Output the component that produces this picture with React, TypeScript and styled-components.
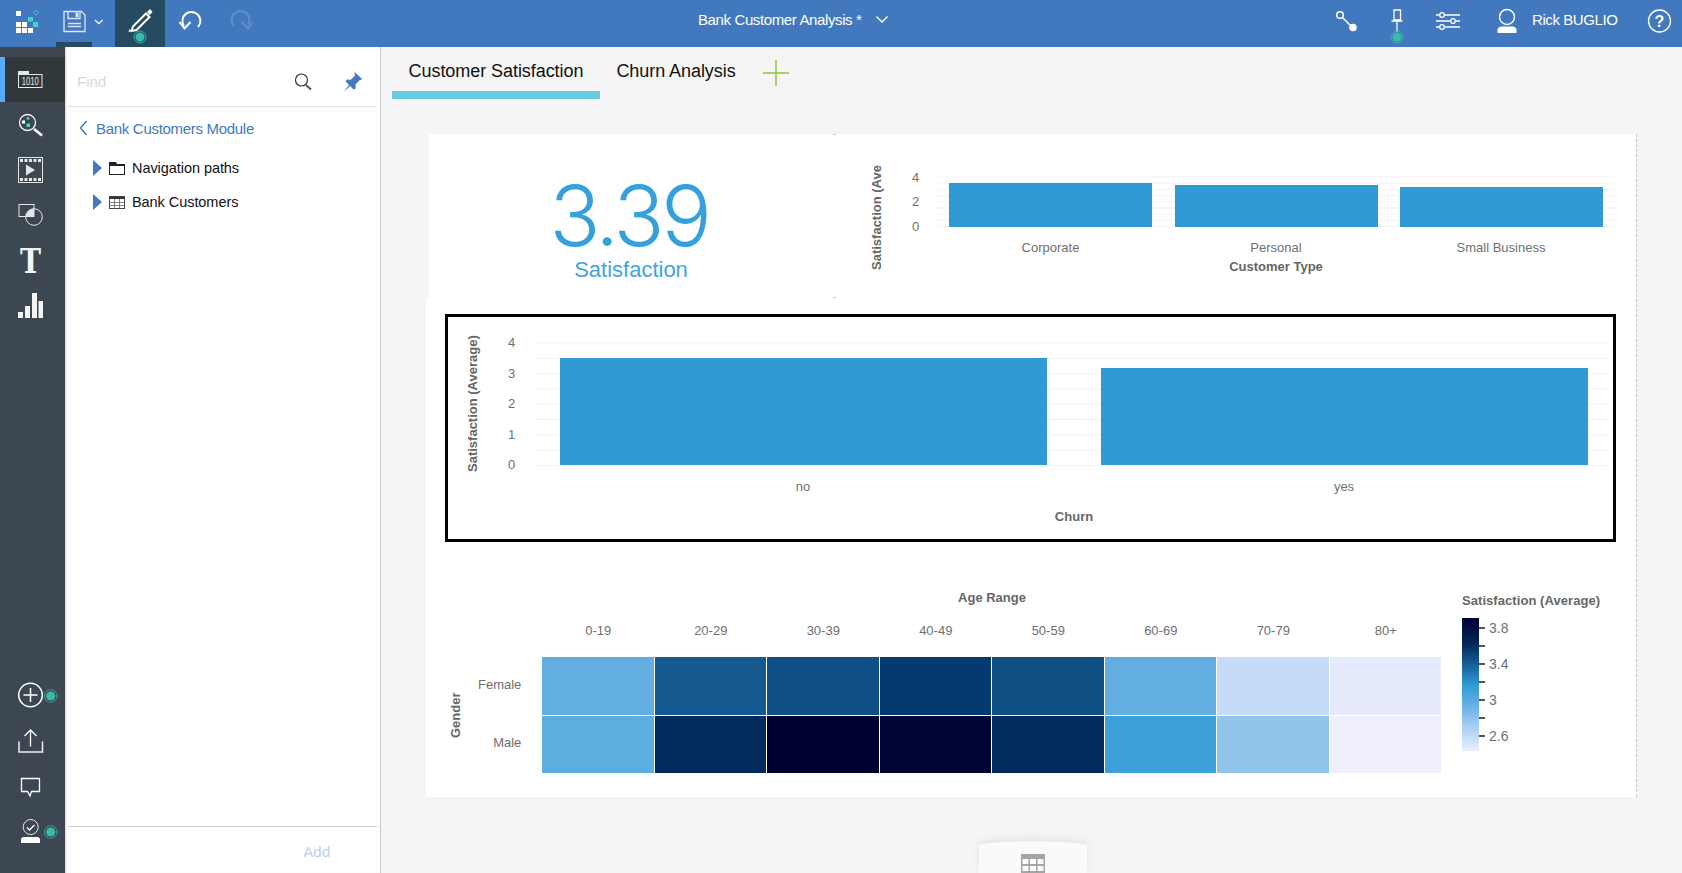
import React from "react";
import styled, { createGlobalStyle } from "styled-components";

const FONT = `"Liberation Sans", Arial, sans-serif`;

const Global = createGlobalStyle`
  html, body { margin: 0; padding: 0; height: 100%; overflow: hidden; background: #f5f5f5; }
  body { font-family: ${FONT}; }
  #root { height: 100%; }
  * { box-sizing: border-box; }
`;

const Page = styled.div`
  width: 1682px;
  height: 873px;
  display: flex;
  flex-direction: column;
  overflow: hidden;
`;

/* ---------- top bar ---------- */
const TopBar = styled.header`
  height: 47px;
  flex: none;
  background: #4178be;
  display: flex;
  align-items: stretch;
  color: #fff;
`;
const BarCell = styled.div<{ $w: number; $active?: boolean }>`
  width: ${(p) => p.$w}px;
  flex: none;
  height: 47px;
  position: relative;
  background: ${(p) => (p.$active ? "#264a60" : "transparent")};
  svg { display: block; }
`;
const SaveMark = styled.span`
  position: absolute;
  left: 0;
  bottom: 0;
  width: 36px;
  height: 5px;
  background: #264a60;
`;
const TitleGroup = styled.div`
  margin-left: 433px;
  display: flex;
  align-items: center;
  font-size: 15px;
  letter-spacing: -0.38px;
  padding-bottom: 8px;
  gap: 14px;
  height: 47px;
  svg { display: block; }
`;
const RightGroup = styled.div`
  margin-left: auto;
  display: flex;
  align-items: stretch;
`;
const UserName = styled.div`
  width: 107px;
  padding-left: 5px;
  padding-bottom: 8px;
  display: flex;
  align-items: center;
  font-size: 15px;
  letter-spacing: -0.42px;
`;

/* ---------- body ---------- */
const Body = styled.div`
  flex: 1;
  display: flex;
  min-height: 0;
`;
const Rail = styled.nav`
  width: 65px;
  flex: none;
  background: #3d4752;
  padding: 10px 0 17px;
  display: flex;
  flex-direction: column;
`;
const RailSpacer = styled.div`
  flex: 1;
`;
const RailItem = styled.div<{ $h?: number; $active?: boolean }>`
  width: 65px;
  height: ${(p) => p.$h ?? 45}px;
  flex: none;
  background: ${(p) => (p.$active ? "#31383c" : "transparent")};
  border-left: ${(p) => (p.$active ? "5px solid #5aaafa" : "0")};
  svg { display: block; margin-left: ${(p) => (p.$active ? "-5px" : "0")}; }
`;

/* ---------- side panel ---------- */
const Panel = styled.aside`
  width: 316px;
  flex: none;
  background: #fff;
  border-right: 1px solid #c9c9c9;
  box-shadow: inset 2px 0 2px -1px #d5d5d5;
  display: flex;
  flex-direction: column;
`;
const FindRow = styled.div`
  height: 60px;
  flex: none;
  margin: 0 3px;
  padding: 10px 0 0 9px;
  border-bottom: 1px solid #e3e3e3;
  display: flex;
  align-items: center;
`;
const FindText = styled.span`
  flex: 1;
  font-size: 15px;
  color: #d6d9db;
`;
const FindIcon = styled.svg<{ $mr: number; $mt?: number }>`
  display: block;
  flex: none;
  margin-right: ${(p) => p.$mr}px;
  margin-top: ${(p) => p.$mt ?? 0}px;
`;
const BackRow = styled.div`
  height: 42px;
  display: flex;
  align-items: center;
  padding-left: 14px;
  gap: 8px;
  font-size: 15px;
  letter-spacing: -0.3px;
  color: #4178be;
`;
const TreeList = styled.div`
  flex: 1;
  padding-top: 2px;
`;
const TreeRow = styled.div`
  height: 34px;
  display: flex;
  align-items: center;
  padding-left: 28px;
  font-size: 14.500px;
  letter-spacing: -0.06px;
  color: #111;
  svg { display: block; flex: none; }
`;
const TreeArrow = styled.svg`
  margin-right: 7px;
`;
const TreeIcon = styled.svg`
  margin-right: 7px;
`;
const PanelFooter = styled.div`
  height: 47px;
  flex: none;
  margin: 0 3px;
  border-top: 1.5px solid #cfcfcf;
  display: flex;
  align-items: center;
  justify-content: flex-end;
  padding: 2px 47px 0 0;
  font-size: 15px;
  color: #b9d0ee;
`;

/* ---------- main ---------- */
const Main = styled.main`
  flex: 1;
  position: relative;
  background: #f5f5f5;
  min-width: 0;
`;
const TabStrip = styled.div`
  height: 52px;
  padding-left: 11px;
  display: flex;
`;
const Tab = styled.div<{ $active?: boolean; $w: number }>`
  width: ${(p) => p.$w}px;
  height: 52px;
  display: flex;
  justify-content: center;
  padding-top: 13px;
  font-size: 18px;
  line-height: 22px;
  letter-spacing: -0.06px;
  color: #111;
  border-bottom: 8px solid ${(p) => (p.$active ? "#68cbe1" : "transparent")};
`;
const AddTab = styled.svg`
  display: block;
  margin: 13px 0 0 11px;
`;
const Board = styled.div`
  margin: 35px 0 0 45px;
  width: 1211px;
  border-right: 1px dashed #c8c8c8;
`;
const TopRow = styled.div`
  display: flex;
  height: 164px;
  padding-left: 3px;
`;
const KpiCard = styled.section`
  width: 404px;
  background: #fff;
  display: flex;
  flex-direction: column;
  align-items: center;
  padding-top: 40px;
  color: #34a0dc;
`;
const KpiValue = styled.div`
  font-family: "Inter", ${FONT};
  font-weight: 300;
  font-size: 84px;
  line-height: 84px;
  letter-spacing: -3.200px;
  padding-right: 4px;
`;
const KpiLabel = styled.div`
  font-size: 22px;
  line-height: 26px;
  margin-top: -1px;
  color: #42a4de;
`;
const BarCard = styled.section`
  flex: 1;
  background: #fff;
  svg { display: block; }
`;
const MiddleRow = styled.section`
  height: 250px;
  background: #fff;
  padding: 16px 19px 6px 19px;
`;
const SelectedBox = styled.div`
  height: 228px;
  width: 1171px;
  border: 3px solid #000;
  svg { display: block; }
`;
const HeatCard = styled.section`
  height: 249px;
  background: #fff;
  display: flex;
`;
const Heat = styled.div`
  width: 1016px;
  flex: none;
  display: grid;
  grid-template-columns: 116px repeat(8, 112.5px);
  grid-template-rows: 37px 24px 48px 58.5px 58.5px;
`;
const HeatTitle = styled.div`
  grid-column: 2 / span 8;
  grid-row: 2;
  display: flex;
  align-items: center;
  justify-content: center;
  font-size: 13px;
  font-weight: 700;
  color: #666;
`;
const ColLabel = styled.div<{ $col: number }>`
  grid-row: 3;
  grid-column: ${(p) => p.$col};
  display: flex;
  justify-content: center;
  align-items: center;
  padding-bottom: 6px;
  font-size: 13px;
  color: #6f6f6f;
`;
const RowHeads = styled.div`
  grid-column: 1;
  grid-row: 4 / span 2;
  display: flex;
  align-items: stretch;
`;
const GenderTitle = styled.div`
  width: 58px;
  flex: none;
  writing-mode: vertical-rl;
  transform: rotate(180deg);
  font-size: 13px;
  font-weight: 700;
  color: #666;
  display: flex;
  justify-content: center;
  align-items: center;
`;
const RowLabels = styled.div`
  flex: 1;
  display: grid;
  grid-template-rows: 1fr 1fr;
  padding-right: 21px;
  font-size: 13px;
  color: #6f6f6f;
  white-space: nowrap;
  margin-left: -6px;
  margin-right: 6px;
`;
const RowLabel = styled.div`
  display: flex;
  align-items: center;
  justify-content: flex-end;
  padding-bottom: 4px;
`;
const Cell = styled.div<{ $c: string; $col: number; $row: number }>`
  grid-column: ${(p) => p.$col};
  grid-row: ${(p) => p.$row};
  background: ${(p) => p.$c};
  border-right: 1px solid #fff;
  border-bottom: 1px solid #fff;
`;
const Legend = styled.div`
  margin-left: 20px;
  padding-top: 45px;
`;
const LegendTitle = styled.div`
  font-size: 13px;
  line-height: 16px;
  font-weight: 700;
  letter-spacing: 0.06px;
  color: #666;
  white-space: nowrap;
`;
const LegendScale = styled.div`
  margin-top: 9px;
  display: flex;
`;
const LegendBar = styled.div`
  width: 17px;
  height: 133px;
  background: linear-gradient(#000030 0%, #03295c 20%, #1a6aa6 38%, #2f9ad6 50%, #6fb4e6 68%, #a9cff2 82%, #e8effe 100%);
`;
const LegendTicks = styled.div`
  padding-top: 1px;
  display: flex;
  flex-direction: column;
`;
const LegendTick = styled.div`
  height: 18px;
  display: flex;
  align-items: center;
  font-size: 14px;
  color: #6f6f6f;
  &::before {
    content: "";
    width: 6px;
    height: 1.5px;
    background: #555;
    margin-right: 4px;
  }
`;
const BottomTab = styled.div`
  position: absolute;
  left: 598px;
  bottom: 0;
  width: 108px;
  height: 32px;
  background: #fafafa;
  border-radius: 50% 50% 0 0 / 5px 5px 0 0;
  box-shadow: 0 -3px 8px rgba(0, 0, 0, 0.07);
  display: flex;
  justify-content: center;
  padding-top: 13px;
  svg { display: block; }
`;

const AxisNum = styled.text`
  font-family: ${FONT};
  font-size: 13px;
  fill: #6f6f6f;
`;
const AxisTitle = styled.text`
  font-family: ${FONT};
  font-size: 13px;
  font-weight: 700;
  fill: #666;
`;

const Dot = ({ cx, cy }: { cx: number; cy: number }) => (
  <g>
    <circle cx={cx} cy={cy} r={6.3} fill="none" stroke="#3ab8a8" strokeWidth={0.8} />
    <circle cx={cx} cy={cy} r={4.6} fill="#3ab8a8" />
  </g>
);

const W = "#fff";
const S = { fill: "none", stroke: W, strokeWidth: 1.5 } as const;

const Logo = () => (
  <svg width={56} height={47} viewBox="0 0 56 47">
    <g fill={W}>
      <rect x={16} y={11} width={5} height={5} />
      <rect x={16} y={22} width={5} height={5} />
      <rect x={22} y={22} width={5} height={5} />
      <rect x={16} y={28} width={5} height={5} />
      <rect x={22} y={28} width={5} height={5} />
      <rect x={28} y={28} width={5} height={5} />
    </g>
    <g fill="#41d6c3">
      <rect x={28} y={17} width={5} height={4.5} />
      <rect x={33} y={22} width={5} height={5} />
    </g>
    <rect x={34} y={11} width={3.6} height={3.6} transform="rotate(45 36 13)" fill="none" stroke="#41d6c3" strokeWidth={0.8} />
  </svg>
);

const Save = () => (
  <svg width={59} height={47} viewBox="56 0 59 47">
    <path d="M64 11.5h17.5l3.5 3.5v16.5h-21z" fill="none" stroke="#dbe6f5" strokeWidth={1.3} />
    <path d="M68 11.5v7h12v-7" fill="none" stroke="#dbe6f5" strokeWidth={1.3} />
    <rect x={75.5} y={12.5} width={3} height={4.5} fill="#dbe6f5" />
    <path d="M68 23.5h13M68 26.5h13" stroke="#dbe6f5" strokeWidth={1.3} />
    <path d="M95 20l3.8 3.6 3.8-3.6" {...S} strokeWidth={1.3} />
  </svg>
);

const Pencil = () => (
  <svg width={50} height={47} viewBox="115 0 50 47">
    <path d="M133 26.500l13-13 3.500 3.500-13 13-5 1z" {...S} strokeWidth={2} />
    <path d="M147 12l3-3 2.500 3-3 3z" fill={W} />
    <path d="M128.500 32l3-1-2-2z" fill={W} />
    <circle cx={140} cy={37} r={6} fill="none" stroke="#3ab8a8" strokeWidth={0.9} />
    <circle cx={140} cy={37} r={4.5} fill="#3ab8a8" />
  </svg>
);

const Undo = ({ x, dim }: { x: number; dim?: boolean }) => (
  <svg width={50} height={47} viewBox={`${x} 0 50 47`}>
    {dim ? (
      <g fill="none" stroke="#5f91d0" strokeWidth={2}>
        <path d="M234 26a9 9 0 1 1 14-1" />
        <path d="M241.5 22l6.5 6.5 5-6.5" />
      </g>
    ) : (
      <g fill="none" stroke={W} strokeWidth={2}>
        <path d="M198 27a9 9 0 1 0 -14 -1" />
        <path d="M179.5 22l5 6.5 6 -6.5" />
      </g>
    )}
  </svg>
);

const Connect = () => (
  <svg width={50} height={47} viewBox="1322 0 50 47">
    <circle cx={1340} cy={15} r={3.3} fill="none" stroke={W} strokeWidth={1.5} />
    <path d="M1342.5 17.5l9 9" stroke={W} strokeWidth={1.5} />
    <circle cx={1353} cy={27.5} r={3.8} fill={W} />
  </svg>
);
const PinTop = () => (
  <svg width={50} height={47} viewBox="1372 0 50 47">
    <path d="M1394 10h6.5v10h-6.5zM1391.500 21h11" fill="none" stroke={W} strokeWidth={1.3} />
    <path d="M1397 21v11" stroke={W} strokeWidth={1.3} />
    <circle cx={1397} cy={37} r={6} fill="none" stroke="#3ab8a8" strokeWidth={0.9} />
    <circle cx={1397} cy={37} r={4.5} fill="#3ab8a8" />
  </svg>
);
const Sliders = () => (
  <svg width={51} height={47} viewBox="1422 0 51 47">
    <path d="M1436 15h24M1436 21h24M1436 27h24" stroke={W} strokeWidth={1.3} />
    <circle cx={1442} cy={15} r={2.3} fill="#4178be" stroke={W} strokeWidth={1.3} />
    <circle cx={1453} cy={21} r={2.3} fill="#4178be" stroke={W} strokeWidth={1.3} />
    <circle cx={1442} cy={27} r={2.3} fill="#4178be" stroke={W} strokeWidth={1.3} />
  </svg>
);
const User = () => (
  <svg width={54} height={47} viewBox="1473 0 54 47">
    <circle cx={1507} cy={17} r={7.5} fill="none" stroke={W} strokeWidth={1.5} />
    <path d="M1497.500 33v-3c0-2 2-3.500 4-3.500h11c2 0 4 1.500 4 3.500v3z" fill={W} />
  </svg>
);
const Help = () => (
  <svg width={48} height={47} viewBox="1634 0 48 47">
    <circle cx={1659.500} cy={21} r={11} fill="none" stroke={W} strokeWidth={1.3} />
    <text x={1659.500} y={27} textAnchor="middle" fontFamily={FONT} fontWeight={700} fontSize={16} fill={W}>?</text>
  </svg>
);

const RailSvg = ({ top, h = 45, children }: { top: number; h?: number; children: React.ReactNode }) => (
  <svg width={65} height={h} viewBox={`0 ${top} 65 ${h}`}>{children}</svg>
);

const Chevron = () => (
  <svg width={14} height={9} viewBox="0 0 14 9">
    <path d="M1.500 1.500l5.500 5.500 5.500-5.500" fill="none" stroke={W} strokeWidth={1.400} />
  </svg>
);

const BlueBars = ({ bars, bottom }: { bars: [number, number, number][]; bottom: number }) => (
  <g fill="#2f9ad6">
    {bars.map(([x, w, t]) => (
      <rect key={x} x={x} y={t} width={w} height={bottom - t} />
    ))}
  </g>
);

const SmallChart = () => (
  <svg width={802} height={164} viewBox="833 134 802 164">
    <path d="M833 134.500h3M833 297.500h3" stroke="#ccc" />
    <g stroke="#f3f3f3">
      {Array.from({ length: 9 }, (_, i) => 177 + i * 6.2).map((y) => (
        <line key={y} x1={937} x2={1615} y1={y} y2={y} />
      ))}
    </g>
    <BlueBars bottom={227} bars={[[949, 203, 183], [1175, 203, 185], [1400, 203, 187]]} />
    <AxisTitle transform="translate(881 270) rotate(-90)">Satisfaction (Ave</AxisTitle>
    {[["4", 182], ["2", 206], ["0", 231]].map(([t, y]) => (
      <AxisNum key={t} x={912} y={y} fontSize={14}>{t}</AxisNum>
    ))}
    {[["Corporate", 1050.5], ["Personal", 1276], ["Small Business", 1501]].map(([t, x]) => (
      <AxisNum key={t} x={x} y={252} textAnchor="middle">{t}</AxisNum>
    ))}
    <AxisTitle x={1276} y={271} textAnchor="middle">Customer Type</AxisTitle>
  </svg>
);

const LargeChart = () => (
  <svg width={1165} height={222} viewBox="448 317 1165 222">
    <g stroke="#f3f3f3">
      {Array.from({ length: 9 }, (_, i) => 343 + i * 15.3).map((y) => (
        <line key={y} x1={533} x2={1610} y1={y} y2={y} />
      ))}
    </g>
    <BlueBars bottom={465} bars={[[560, 487, 358], [1101, 487, 368]]} />
    <AxisTitle transform="translate(477 472) rotate(-90)">Satisfaction (Average)</AxisTitle>
    {[["4", 347], ["3", 378], ["2", 408], ["1", 439], ["0", 469]].map(([t, y]) => (
      <AxisNum key={t} x={508} y={y}>{t}</AxisNum>
    ))}
    <AxisNum x={803} y={491} textAnchor="middle">no</AxisNum>
    <AxisNum x={1344} y={491} textAnchor="middle">yes</AxisNum>
    <AxisTitle x={1074} y={521} textAnchor="middle">Churn</AxisTitle>
  </svg>
);

const AGES = ["0-19", "20-29", "30-39", "40-49", "50-59", "60-69", "70-79", "80+"];
const FEMALE = ["#62aee0", "#145a90", "#0e5085", "#043a70", "#0e4f84", "#62aee0", "#c6dcf6", "#e5ebfd"];
const MALE = ["#5cade0", "#022a5c", "#000030", "#000535", "#022a5c", "#3ea0da", "#92c5ec", "#efeffe"];
const TICKS = ["3.8", "", "3.4", "", "3", "", "2.6"];

export default function App() {
  return (
    <Page>
      <Global />
      <TopBar>
        <BarCell $w={56}><Logo /></BarCell>
        <BarCell $w={59}><SaveMark /><Save /></BarCell>
        <BarCell $w={50} $active><Pencil /></BarCell>
        <BarCell $w={50}><Undo x={165} /></BarCell>
        <BarCell $w={50}><Undo x={215} dim /></BarCell>
        <TitleGroup>
          <span>Bank Customer Analysis *</span>
          <Chevron />
        </TitleGroup>
        <RightGroup>
          <BarCell $w={50}><Connect /></BarCell>
          <BarCell $w={50}><PinTop /></BarCell>
          <BarCell $w={51}><Sliders /></BarCell>
          <BarCell $w={54}><User /></BarCell>
          <UserName>Rick BUGLIO</UserName>
          <BarCell $w={48}><Help /></BarCell>
        </RightGroup>
      </TopBar>
      <Body>
        <Rail>
          <RailItem $active>
            <RailSvg top={57}>
              <path d="M18 71h11v3h-11z" fill="#e6e6e6" />
              <rect x={18.500} y={74.500} width={23.500} height={13} fill="none" stroke="#e6e6e6" />
              <text x={21.800} y={85} textLength={17} lengthAdjust="spacingAndGlyphs" fontFamily={FONT} fontSize={10.500} fill="#e6e6e6">1010</text>
            </RailSvg>
          </RailItem>
          <RailItem>
            <RailSvg top={102}>
              <circle cx={27.500} cy={122.500} r={8} fill="none" stroke={W} strokeWidth={1.300} />
              <path d="M34 129l8 6.500" stroke={W} strokeWidth={2.600} />
              <circle cx={28} cy={118.500} r={1.400} fill="#41d6c3" />
              <rect x={22} y={120.500} width={3} height={3} fill={W} />
              <rect x={26.500} y={123.500} width={3.500} height={3.500} fill="#41d6c3" />
            </RailSvg>
          </RailItem>
          <RailItem>
            <RailSvg top={147}>
              <rect x={18.500} y={157.500} width={24} height={25} fill="none" stroke="#e6e6e6" />
              <g fill="#e6e6e6">
                {[20, 24.500, 29, 33.500, 38].map((x) => (
                  <React.Fragment key={x}>
                    <rect x={x} y={159} width={3} height={3} />
                    <rect x={x} y={178} width={3} height={3} />
                  </React.Fragment>
                ))}
                <path d="M26 164.500l9 5.500-9 5.500z" />
              </g>
            </RailSvg>
          </RailItem>
          <RailItem>
            <RailSvg top={192}>
              <rect x={19} y={204.500} width={15} height={12} fill="none" stroke="#e6e6e6" />
              <circle cx={34} cy={217} r={8.300} fill="none" stroke="#e6e6e6" />
              <path d="M34 217v-8.300a8.300 8.300 0 0 0 -8.300 8.300z" fill="#e6e6e6" />
            </RailSvg>
          </RailItem>
          <RailItem>
            <RailSvg top={237}>
              <text x={30.500} y={273} textAnchor="middle" fontFamily={`"DejaVu Serif", serif`} fontWeight={700} fontSize={34} textLength={21} lengthAdjust="spacingAndGlyphs" fill="#f4f4f4">T</text>
            </RailSvg>
          </RailItem>
          <RailItem $h={46}>
            <RailSvg top={282} h={46}>
              <g fill="#f4f4f4">
                <rect x={18} y={312} width={5} height={6} />
                <rect x={25} y={306} width={5} height={12} />
                <rect x={32} y={293} width={5} height={25} />
                <rect x={38.500} y={301} width={4.500} height={17} />
              </g>
            </RailSvg>
          </RailItem>
          <RailSpacer />
          <RailItem $h={46}>
            <RailSvg top={672} h={46}>
              <circle cx={30.500} cy={695} r={11.800} {...S} />
              <path d="M30.500 688v14M23.500 695h14" {...S} />
              <Dot cx={50.700} cy={696} />
            </RailSvg>
          </RailItem>
          <RailItem $h={46}>
            <RailSvg top={718} h={46}>
              <path d="M19 741.500v10.500h23.500v-10.500" fill="none" stroke="#eee" strokeWidth={1.500} />
              <path d="M30.500 746.500v-16M24.500 736l6-6 6 6" {...S} strokeWidth={1.300} />
            </RailSvg>
          </RailItem>
          <RailItem $h={46}>
            <RailSvg top={764} h={46}>
              <path d="M21.500 778.500h18v13h-8l-1.500 4.500-2.500-4.500h-6z" {...S} strokeWidth={1.300} />
            </RailSvg>
          </RailItem>
          <RailItem $h={46}>
            <RailSvg top={810} h={46}>
              <circle cx={30.700} cy={827} r={7.500} fill="none" stroke="#e6e6e6" strokeWidth={1} />
              <path d="M27 827.500l2.500 2.500 5-5" fill="none" stroke={W} strokeWidth={1.400} />
              <path d="M21 843v-3c0-2 1-3 3-3h13c2 0 3 1 3 3v3z" fill={W} />
              <Dot cx={50.700} cy={832} />
            </RailSvg>
          </RailItem>
        </Rail>
        <Panel>
          <FindRow>
            <FindText>Find</FindText>
            <FindIcon $mr={28} width={18} height={20} viewBox="0 0 18 20">
              <circle cx={7.500} cy={8} r={6} fill="none" stroke="#333" strokeWidth={1.200} />
              <path d="M12 13l5 4.500" stroke="#555" strokeWidth={2} />
            </FindIcon>
            <FindIcon $mr={13} $mt={1} width={24} height={24} viewBox="0 0 22 22">
              <path d="M13 1.500l7.500 7-2.300.7-4 4 .2 3.500-1.800 1.300-3.300-3.300-6 5.500 5-6.500-3.300-3.300 1.500-1.800 3.500.3 3.900-3.900z" fill="#4178be" />
            </FindIcon>
          </FindRow>
          <BackRow>
            <svg width={9} height={16} viewBox="0 0 9 16">
              <path d="M7.500 1l-6 7 6 7" fill="none" stroke="#4178be" strokeWidth={1.400} />
            </svg>
            <span>Bank Customers Module</span>
          </BackRow>
          <TreeList>
            <TreeRow>
              <TreeArrow width={9} height={16} viewBox="0 0 9 16"><path d="M0 0l9 8-9 8z" fill="#4178be" /></TreeArrow>
              <TreeIcon width={16} height={13} viewBox="0 0 16 13">
                <path d="M0 0h7l1 2h8v2h-16z" fill="#222" />
                <rect x={0.500} y={2.500} width={15} height={10} fill="none" stroke="#222" />
              </TreeIcon>
              <span>Navigation paths</span>
            </TreeRow>
            <TreeRow>
              <TreeArrow width={9} height={16} viewBox="0 0 9 16"><path d="M0 0l9 8-9 8z" fill="#4178be" /></TreeArrow>
              <TreeIcon width={16} height={13} viewBox="0 0 16 13">
                <rect x={0} y={0} width={16} height={3} fill="#333" />
                <rect x={0.500} y={0.500} width={15} height={12} fill="none" stroke="#444" />
                <path d="M0 6.500h16M0 9.500h16M5.500 3v10M10.500 3v10" stroke="#666" strokeWidth={0.800} />
              </TreeIcon>
              <span>Bank Customers</span>
            </TreeRow>
          </TreeList>
          <PanelFooter>Add</PanelFooter>
        </Panel>
        <Main>
          <TabStrip>
            <Tab $active $w={208}>Customer Satisfaction</Tab>
            <Tab $w={152}>Churn Analysis</Tab>
            <AddTab width={26} height={26} viewBox="0 0 26 26">
              <path d="M13 0v26M0 13h26" stroke="#8cc63f" strokeWidth={1.500} />
            </AddTab>
          </TabStrip>
          <Board>
            <TopRow>
              <KpiCard>
                <KpiValue>3.39</KpiValue>
                <KpiLabel>Satisfaction</KpiLabel>
              </KpiCard>
              <BarCard><SmallChart /></BarCard>
            </TopRow>
            <MiddleRow>
              <SelectedBox><LargeChart /></SelectedBox>
            </MiddleRow>
            <HeatCard>
              <Heat>
                <HeatTitle>Age Range</HeatTitle>
                {AGES.map((a, i) => (
                  <ColLabel key={a} $col={i + 2}>{a}</ColLabel>
                ))}
                <RowHeads>
                  <GenderTitle>Gender</GenderTitle>
                  <RowLabels>
                    <RowLabel>Female</RowLabel>
                    <RowLabel>Male</RowLabel>
                  </RowLabels>
                </RowHeads>
                {FEMALE.map((c, i) => <Cell key={`f${i}`} $c={c} $col={i + 2} $row={4} />)}
                {MALE.map((c, i) => <Cell key={`m${i}`} $c={c} $col={i + 2} $row={5} />)}
              </Heat>
              <Legend>
                <LegendTitle>Satisfaction (Average)</LegendTitle>
                <LegendScale>
                  <LegendBar />
                  <LegendTicks>
                    {TICKS.map((t, i) => <LegendTick key={i}>{t}</LegendTick>)}
                  </LegendTicks>
                </LegendScale>
              </Legend>
            </HeatCard>
          </Board>
          <BottomTab>
            <svg width={24} height={19} viewBox="0 0 24 19">
              <rect width={24} height={19} fill="#a5a5a5" />
              <g fill="#fafafa">
                {[1.500, 9, 16.500].map((x) => (
                  <React.Fragment key={x}>
                    <rect x={x} y={5} width={6} height={5} />
                    <rect x={x} y={12} width={6} height={5} />
                  </React.Fragment>
                ))}
              </g>
            </svg>
          </BottomTab>
        </Main>
      </Body>
    </Page>
  );
}
